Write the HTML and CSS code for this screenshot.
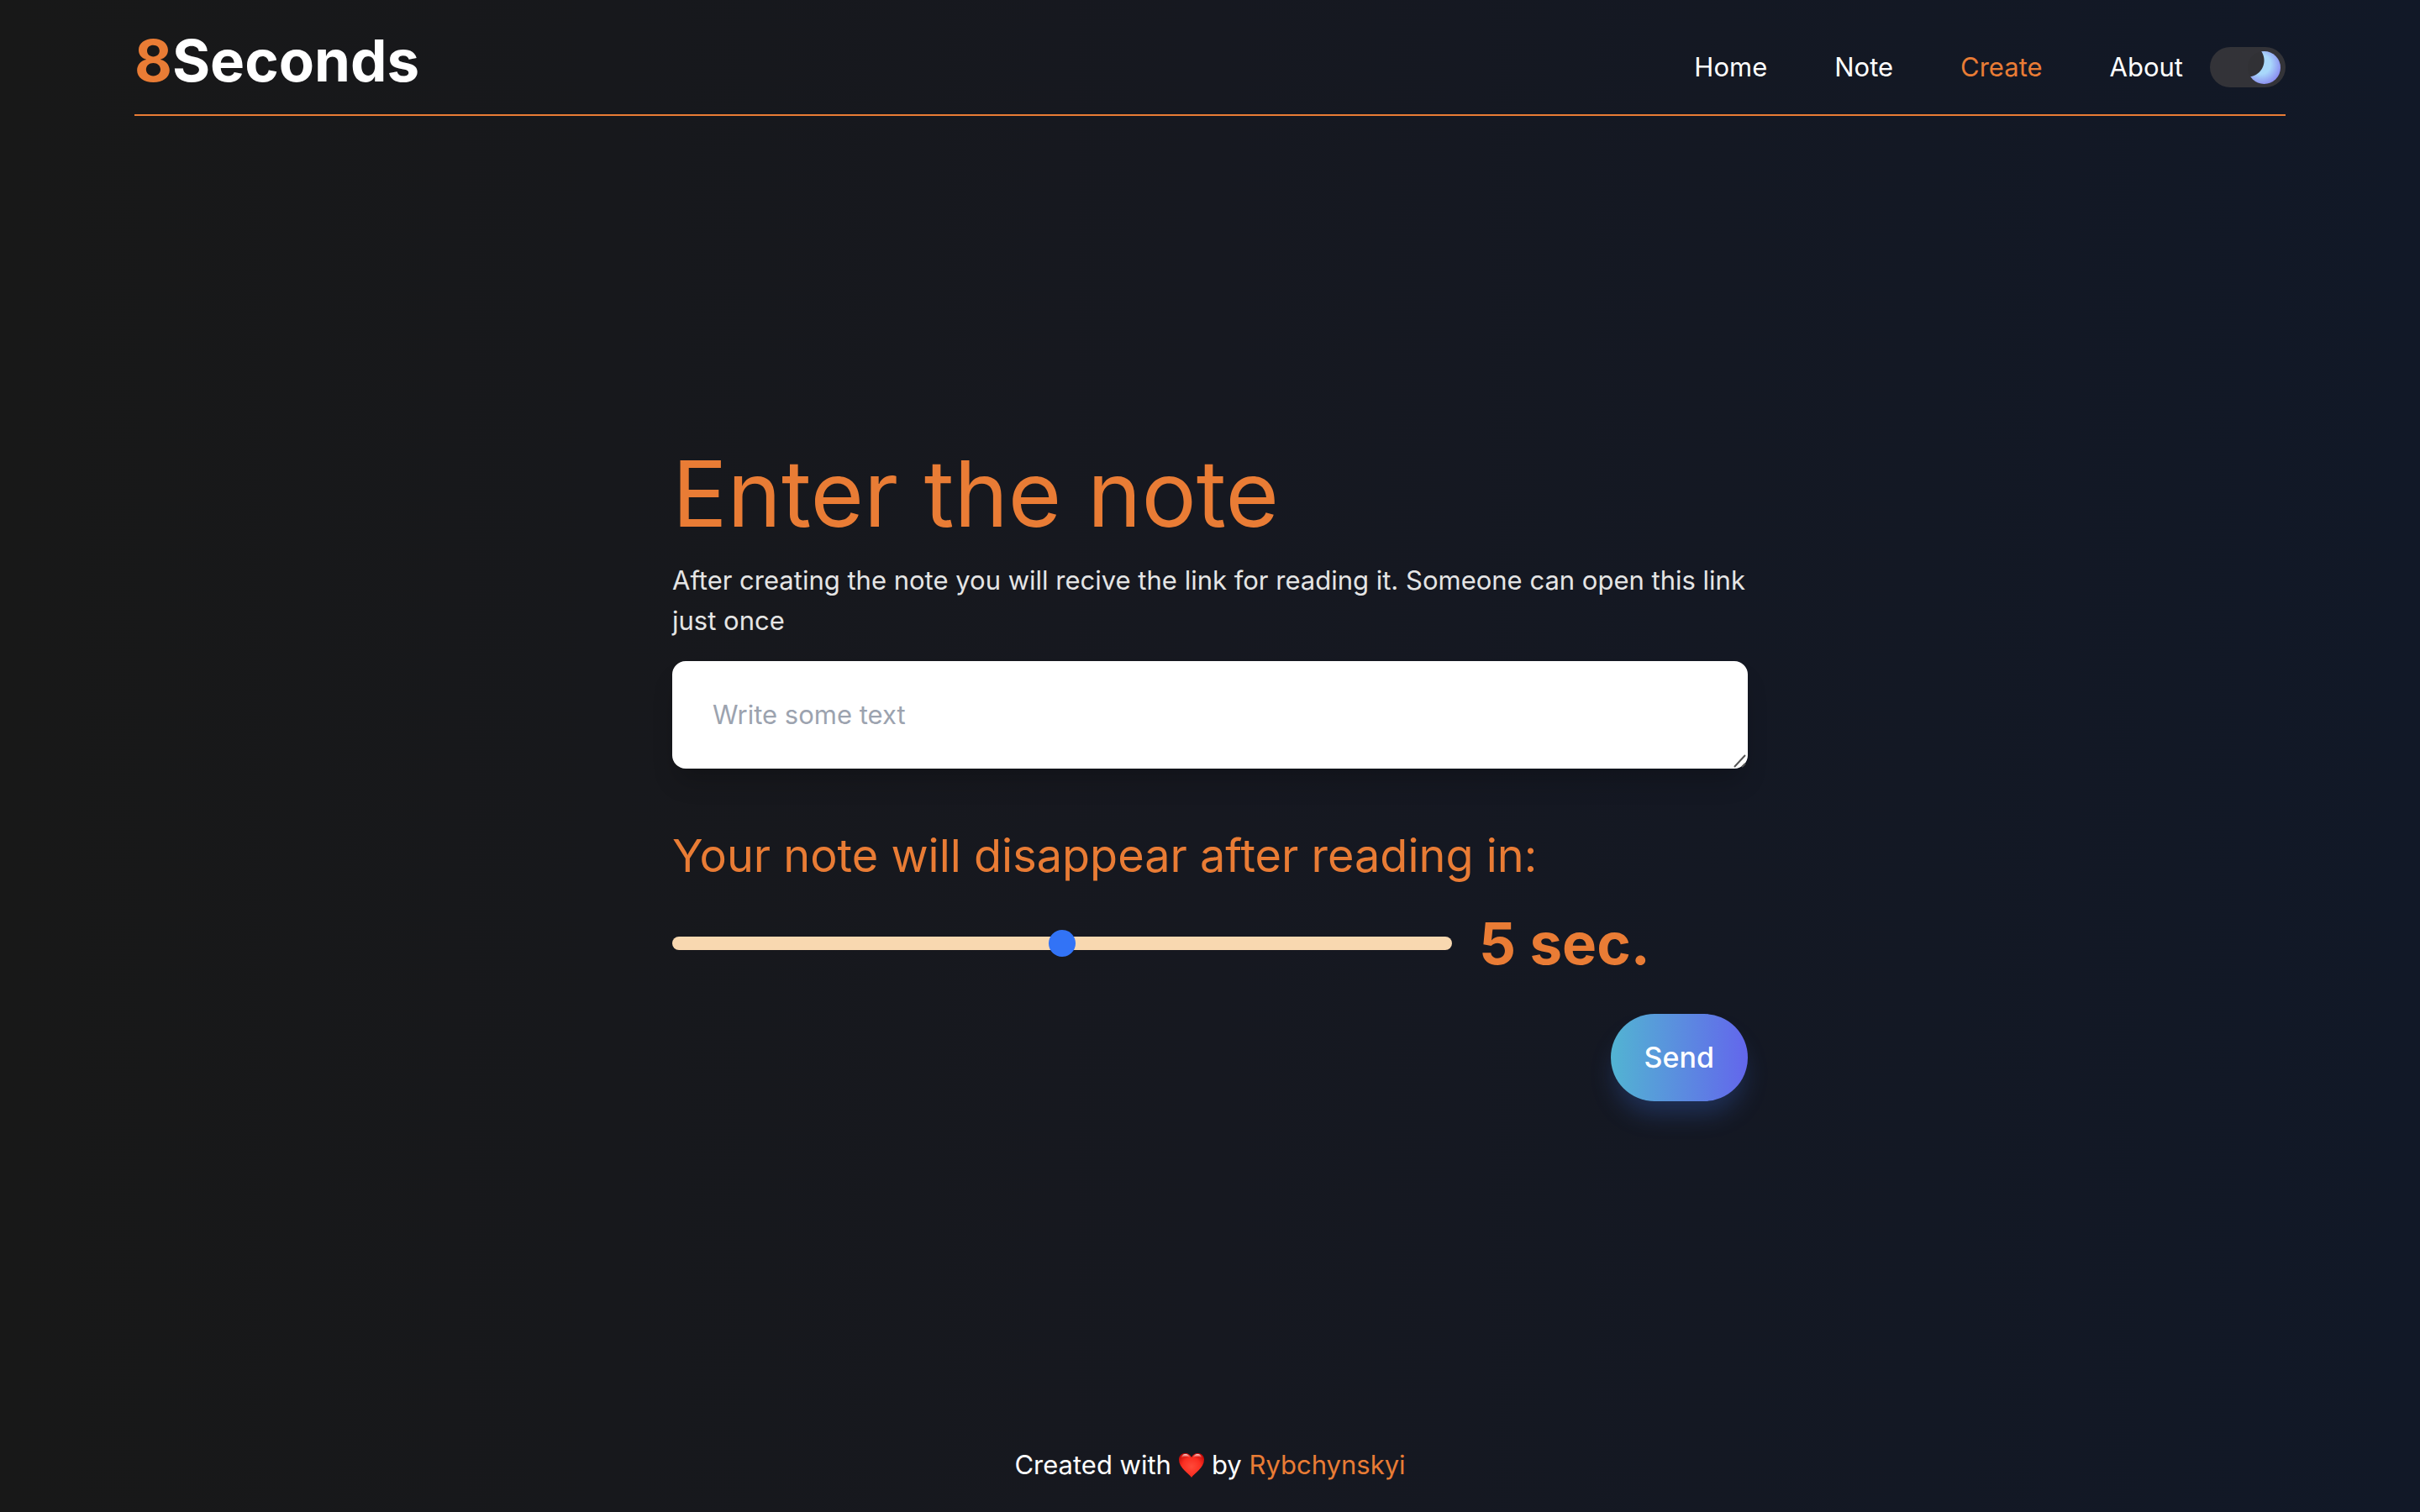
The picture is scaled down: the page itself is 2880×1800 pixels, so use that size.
FILE: index.html
```html
<!DOCTYPE html>
<html lang="en">
<head>
  <meta charset="utf-8">
  <meta name="viewport" content="width=device-width, initial-scale=1">
  <title>8Seconds</title>
  <link rel="stylesheet" href="styles.css">
</head>
<body class="page">
  <header class="header">
    <a class="logo" href="#"><span class="accent">8</span>Seconds</a>
    <div class="header-side">
      <nav class="nav">
        <a class="nav-link" href="#">Home</a>
        <a class="nav-link" href="#">Note</a>
        <a class="nav-link accent" href="#" aria-current="page">Create</a>
        <a class="nav-link" href="#">About</a>
      </nav>
      <input class="theme-toggle" type="checkbox" role="switch" aria-label="Dark theme" checked>
    </div>
  </header>

  <main class="main">
    <form class="form">
      <h1 class="title"><label for="note">Enter the note</label></h1>
      <p class="hint">After creating the note you will recive the link for reading it. Someone can open this link just once</p>
      <div class="note-box">
        <textarea class="note" id="note" rows="1" placeholder="Write some text"></textarea>
        <svg class="grip" viewBox="0 0 18 18" aria-hidden="true">
          <path d="M2 16 15 2M11 16 15 12" fill="none" stroke="#555" stroke-width="2"/>
        </svg>
      </div>
      <label class="subtitle" for="delay">Your note will disappear after reading in:</label>
      <div class="delay-row">
        <input class="delay" id="delay" type="range" min="1" max="9" value="5">
        <output class="delay-value" for="delay">5 sec.</output>
      </div>
      <button class="send" type="submit">Send</button>
    </form>
  </main>

  <footer class="footer">
    <span>Created with</span>
    <svg class="heart" viewBox="0 0 32 32" role="img" aria-label="love">
      <defs>
        <radialGradient id="heart-fill" cx=".5" cy=".55" r=".6">
          <stop offset="0" stop-color="#ff4a3a"/>
          <stop offset=".6" stop-color="#fb2f22"/>
          <stop offset="1" stop-color="#c90d0a"/>
        </radialGradient>
        <linearGradient id="heart-shine" x1="0" y1="0" x2="0" y2="1">
          <stop offset="0" stop-color="#fff" stop-opacity=".9"/>
          <stop offset="1" stop-color="#ff8070" stop-opacity="0"/>
        </linearGradient>
      </defs>
      <path d="M16 31C13 26 1 20 1 9.500 1 5 4.500 2 8.500 2 12 2 14.800 4 16 7 17.200 4 20 2 23.500 2 27.500 2 31 5 31 9.500 31 20 19 26 16 31Z" fill="url(#heart-fill)"/>
      <path d="M3.500 8C4 5 6 3 8.700 3 11.500 3 13.500 4.500 14.300 7.500 11 5.500 7 5.500 3.500 8ZM28.500 8C28 5 26 3 23.300 3 20.500 3 18.500 4.500 17.700 7.500 21 5.500 25 5.500 28.500 8Z" fill="url(#heart-shine)"/>
    </svg>
    <span>by <a class="accent" href="#">Rybchynskyi</a></span>
  </footer>
</body>
</html>
```
FILE: styles.css
```css
*,
*::before {
  box-sizing: border-box;
}

.page {
  display: flex;
  flex-direction: column;
  min-height: 100vh;
  margin: 0;
  padding: 0 160px;
  background: linear-gradient(to right, #181818, #161820 50%, #111827);
  color: #fff;
  font-family: Inter, "Liberation Sans", sans-serif;
  font-size: 31px;
  line-height: 48px;
}

a {
  color: inherit;
  text-decoration: none;
}

.accent,
a.accent {
  color: #e97c35;
}

.header {
  display: flex;
  align-items: center;
  justify-content: space-between;
  padding: 24px 0 12px;
  border-bottom: 2px solid #e97c35;
}

.logo {
  padding: 4px 0 8px;
  font-size: 69px;
  font-weight: 700;
  line-height: 88px;
}

.header-side {
  display: flex;
  align-items: center;
  gap: 32px;
  padding-top: 12px;
}

.nav {
  display: flex;
  gap: 80px;
}

.theme-toggle {
  appearance: none;
  width: 90px;
  height: 48px;
  margin: 0;
  padding: 5px 6px;
  border-radius: 24px;
  background: #333338;
}

.theme-toggle::before {
  content: "";
  display: block;
  width: 39px;
  height: 39px;
  border-radius: 50%;
  background:
    radial-gradient(circle at 0 11px, #313135 19px, transparent 20px),
    radial-gradient(circle at 40% 40%, #a9d8fb 35%, #8a8cf0 75%);
}

.theme-toggle:checked::before {
  margin-left: auto;
}

.main {
  display: flex;
  flex: 1;
  align-items: center;
  justify-content: center;
  padding-top: 12px;
}

.form {
  display: flex;
  flex-direction: column;
  width: 50%;
  min-width: 1280px;
}

.title {
  margin: 0 0 20px;
  color: #e97c35;
  font-size: 109px;
  font-weight: 400;
  line-height: 120px;
}

.hint {
  margin: 0 0 24px;
  color: #e5e5e5;
}

.note-box {
  display: flex;
  position: relative;
  margin-bottom: 68px;
}

.note {
  flex: 1;
  height: 128px;
  padding: 40px 48px;
  border: 0;
  border-radius: 16px;
  background: #fff;
  box-shadow: 0 20px 30px -6px rgba(0, 0, 0, 0.2);
  color: #111827;
  font: inherit;
  resize: none;
}

.note::placeholder {
  color: #9ca3af;
}

.grip {
  position: absolute;
  right: 0;
  bottom: 0;
  width: 18px;
  height: 18px;
}

.subtitle {
  margin-bottom: 28px;
  color: #e97c35;
  font-size: 54px;
  line-height: 72px;
}

.delay-row {
  display: flex;
  align-items: center;
  gap: 32px;
  margin-bottom: 44px;
}

.delay {
  appearance: none;
  width: 928px;
  height: 16px;
  margin: 0;
  border-radius: 8px;
  background: #f8d8b0;
}

.delay::-webkit-slider-thumb {
  appearance: none;
  width: 32px;
  height: 32px;
  border-radius: 50%;
  background: #3273f6;
}

.delay-value {
  color: #e97c35;
  font-size: 69px;
  font-weight: 700;
  line-height: 80px;
}

.send {
  align-self: flex-end;
  padding: 24px 40px;
  border: 0;
  border-radius: 52px;
  background: linear-gradient(to right, #52b4d2, #6366ec);
  box-shadow: 0 20px 30px -6px rgba(59, 110, 220, 0.3);
  color: #fff;
  font: inherit;
  font-size: 34px;
  font-weight: 500;
  line-height: 56px;
}

.footer {
  display: flex;
  align-items: center;
  justify-content: center;
  gap: 8px;
  padding: 32px 0;
}

.heart {
  width: 32px;
  height: 32px;
}
```
